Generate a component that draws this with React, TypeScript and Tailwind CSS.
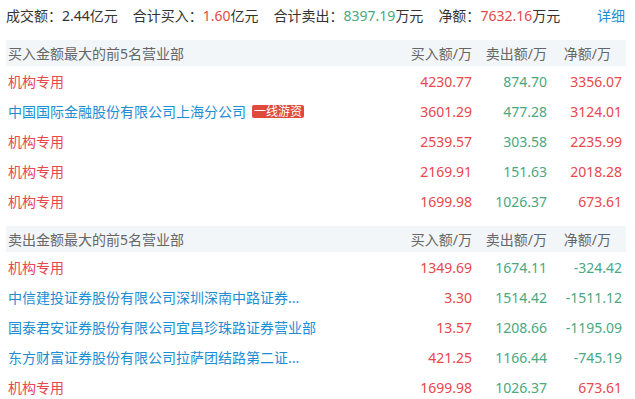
import React from "react";

type Row = {
  name: string;
  tag?: string;
  link?: boolean;
  buy: string;
  sell: string;
  net: string;
};

const buyRows: Row[] = [
  { name: "机构专用", buy: "4230.77", sell: "874.70", net: "3356.07" },
  {
    name: "中国国际金融股份有限公司上海分公司",
    tag: "一线游资",
    link: true,
    buy: "3601.29",
    sell: "477.28",
    net: "3124.01",
  },
  { name: "机构专用", buy: "2539.57", sell: "303.58", net: "2235.99" },
  { name: "机构专用", buy: "2169.91", sell: "151.63", net: "2018.28" },
  { name: "机构专用", buy: "1699.98", sell: "1026.37", net: "673.61" },
];

const sellRows: Row[] = [
  { name: "机构专用", buy: "1349.69", sell: "1674.11", net: "-324.42" },
  {
    name: "中信建投证券股份有限公司深圳深南中路证券...",
    link: true,
    buy: "3.30",
    sell: "1514.42",
    net: "-1511.12",
  },
  {
    name: "国泰君安证券股份有限公司宜昌珍珠路证券营业部",
    link: true,
    buy: "13.57",
    sell: "1208.66",
    net: "-1195.09",
  },
  {
    name: "东方财富证券股份有限公司拉萨团结路第二证...",
    link: true,
    buy: "421.25",
    sell: "1166.44",
    net: "-745.19",
  },
  { name: "机构专用", buy: "1699.98", sell: "1026.37", net: "673.61" },
];

const RED = "text-[#e8474c]";
const GREEN = "text-[#4aa882]";

function Section({ title, rows, last }: { title: string; rows: Row[]; last?: boolean }) {
  return (
    <div className={last ? "" : "mb-[10px]"}>
      <div className="flex h-[26px] items-center bg-[#f3f6f9] pl-[2px] pr-[4px] text-[#666]">
        <div className="flex-1">{title}</div>
        <div className="w-[75px] text-right">买入额/万</div>
        <div className="w-[75px] text-right">卖出额/万</div>
        <div className="w-[75px] pr-[11px] text-right">净额/万</div>
      </div>
      {rows.map((r, i) => (
        <div key={i} className="flex h-[30px] items-center pl-[2px] pr-[4px]">
          <div className="flex min-w-0 flex-1 items-center whitespace-nowrap">
            <span className={r.link ? "text-[#1d8ed3]" : RED}>{r.name}</span>
            {r.tag && (
              <span className="ml-[6px] rounded-[2px] bg-[#df4a3b] px-[2px] text-[12px] leading-[13px] text-white">
                {r.tag}
              </span>
            )}
          </div>
          <div className={`w-[75px] text-right ${RED}`}>{r.buy}</div>
          <div className={`w-[75px] text-right ${GREEN}`}>{r.sell}</div>
          <div className={`w-[75px] text-right ${r.net.startsWith("-") ? GREEN : RED}`}>
            {r.net}
          </div>
        </div>
      ))}
    </div>
  );
}

export default function App() {
  return (
    <div
      className="h-[399px] w-[635px] overflow-hidden bg-white pl-[6px] pr-[9px] text-[14px] text-[#333]"
      style={{ fontFamily: '"Noto Sans", "Noto Sans CJK SC", sans-serif' }}
    >
      <div className="mb-[10px] flex h-[30px] items-center whitespace-nowrap pr-[1px]">
        <div className="flex flex-1 items-center gap-[15px]">
          <span>
            成交额：<span>2.44</span>亿元
          </span>
          <span>
            合计买入：<span className={RED}>1.60</span>亿元
          </span>
          <span>
            合计卖出：<span className={GREEN}>8397.19</span>万元
          </span>
          <span>
            净额：<span className={RED}>7632.16</span>万元
          </span>
        </div>
        <span className="text-[#1d8ed3]">详细</span>
      </div>
      <Section title="买入金额最大的前5名营业部" rows={buyRows} />
      <Section title="卖出金额最大的前5名营业部" rows={sellRows} last />
    </div>
  );
}
